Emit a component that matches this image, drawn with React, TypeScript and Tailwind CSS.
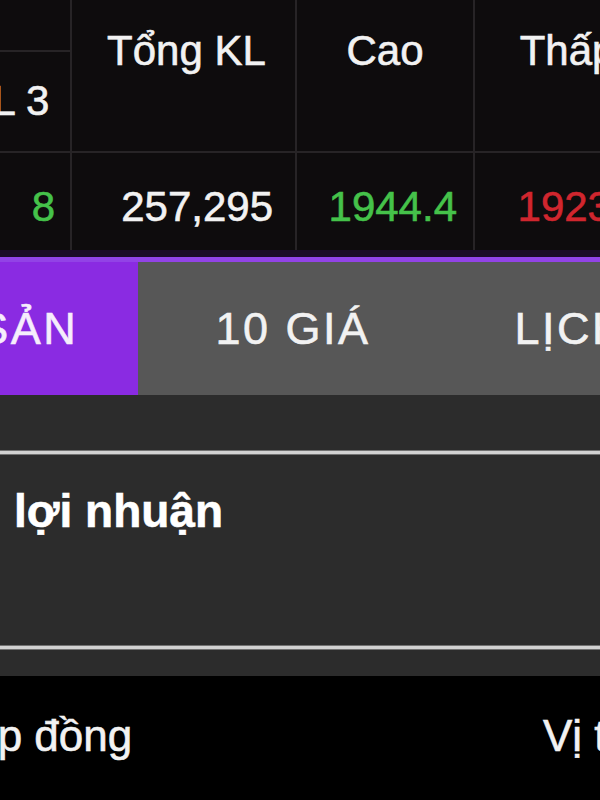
export default function App() {
  const line = "border-[#272426]";

  return (
    <div className="w-[600px] h-[800px] overflow-hidden bg-black text-[#f2f2f2] font-['Liberation_Sans',Arial,sans-serif] [-webkit-text-stroke:0.6px_currentColor]">
      {/* quote table */}
      <div className="bg-[#0e0c0d]">
        <div className="flex w-max -ml-[58px] h-[153px]">
          <div className={`w-[130px] flex flex-col border-r-2 border-b-2 ${line}`}>
            <div className={`h-[52px] border-b-2 ${line}`} />
            <div className="flex-1 text-center text-[42px] leading-[48px] pt-[25px] pl-[2px]">KL 3</div>
          </div>
          <div className={`w-[225px] border-r-2 border-b-2 ${line} text-center text-[42px] leading-[48px] pt-[27px] pl-[6px]`}>
            Tổng KL
          </div>
          <div className={`w-[178px] border-r-2 border-b-2 ${line} text-center text-[42px] leading-[48px] pt-[27px]`}>
            Cao
          </div>
          <div className={`w-[183px] border-r-2 border-b-2 ${line} text-center text-[42px] leading-[48px] pt-[27px] pl-[4px]`}>
            Thấp
          </div>
        </div>
        <div className="flex w-max -ml-[58px] h-[97px] text-[42px] leading-[48px]">
          <div className={`w-[130px] border-r-2 ${line} text-right pr-[15px] pt-[30px] text-[#45c24a]`}>8</div>
          <div className={`w-[225px] border-r-2 ${line} text-right pr-[22px] pt-[30px]`}>257,295</div>
          <div className={`w-[178px] border-r-2 ${line} text-right pr-[16px] pt-[30px] text-[#45c24a]`}>1944.4</div>
          <div className={`w-[183px] border-r-2 ${line} text-right pr-[10px] pt-[30px] text-[#d0262e]`}>1923.1</div>
        </div>
        <div className="h-[7px] bg-[#1b0b26]" />
      </div>

      {/* tabs */}
      <div className="border-t-[5px] border-[#9243e6] bg-[#575757]">
        <div className="flex w-max -ml-[174px] h-[133px] text-[45px] tracking-[2.5px]">
          <div className="w-[312px] bg-[#8a2be2] flex items-center justify-center text-[#f6eefc]">TÀI SẢN</div>
          <div className="w-[308px] flex items-center justify-center pl-[2px]">10 GIÁ</div>
          <div className="w-[308px] flex items-center justify-center pl-[30px]">LỊCH SỬ</div>
        </div>
      </div>

      {/* profit panel */}
      <div className="bg-[#2c2c2c]">
        <div className="h-[55px]" />
        <div className="h-[5px] border-y border-[#727272] bg-[#d2d2d2]" />
        <div className="h-[190px] pl-[14px] pt-[30px] text-[46px] leading-[52px] font-bold text-white">lợi nhuận</div>
        <div className="h-[5px] border-y border-[#727272] bg-[#d2d2d2]" />
        <div className="h-[26px]" />
      </div>

      {/* bottom header */}
      <div className="flex pt-[36px] text-[44px] leading-[48px] whitespace-nowrap">
        <div className="w-[606px] -ml-[63px] shrink-0">Hợp đồng</div>
        <div>Vị thế</div>
      </div>
    </div>
  );
}
